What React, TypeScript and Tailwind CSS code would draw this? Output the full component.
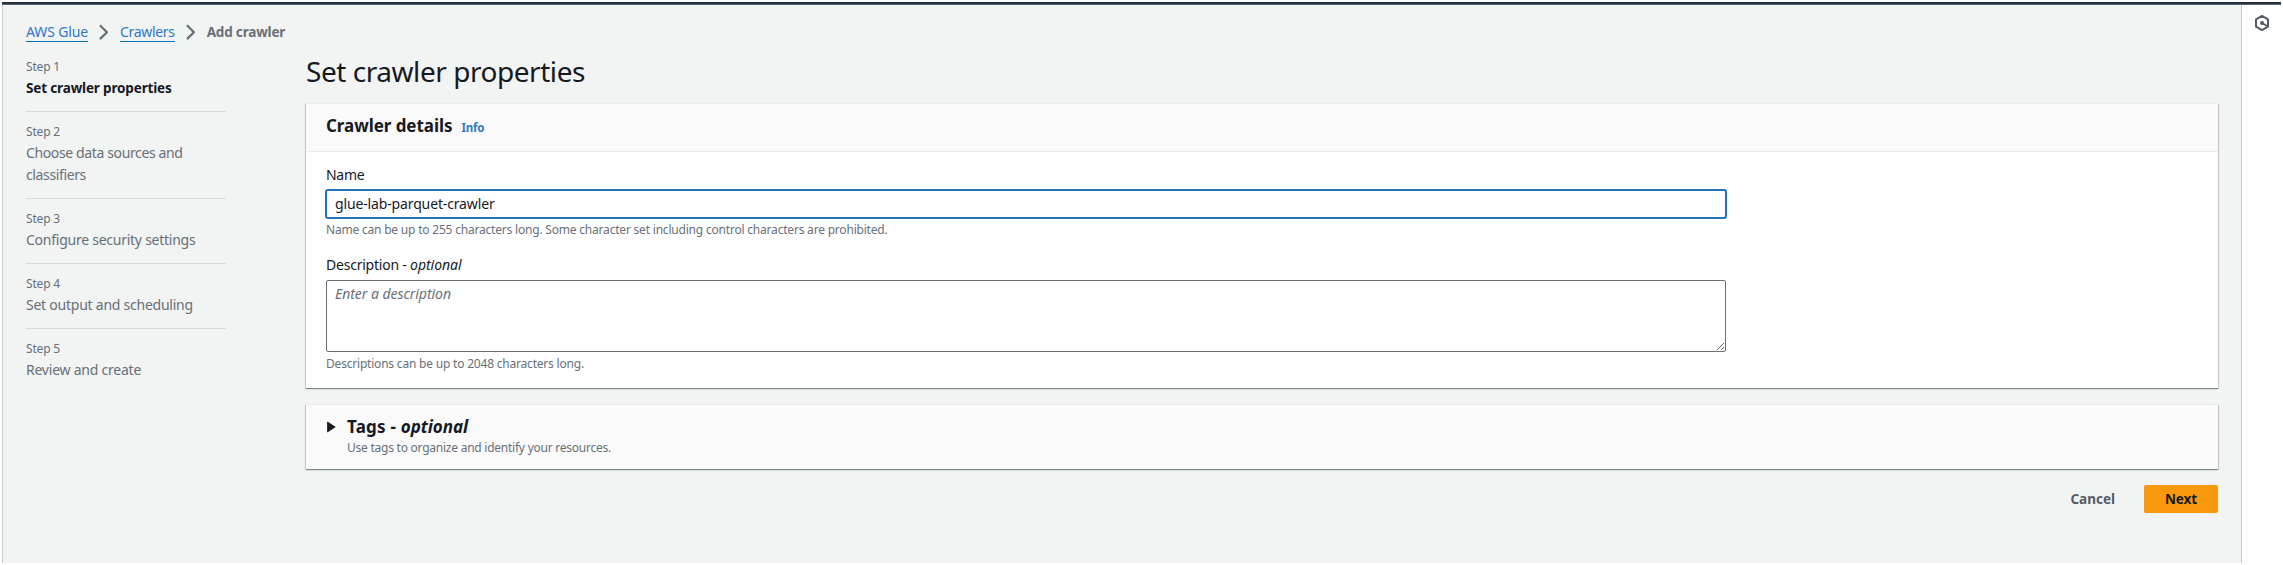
import type { ReactNode } from "react";

const steps = [
  { title: ["Set crawler properties"], tracking: "tracking-[-0.15px]", active: true },
  { title: ["Choose data sources and", "classifiers"], tracking: "tracking-[-0.37px]" },
  { title: ["Configure security settings"], tracking: "tracking-[-0.25px]" },
  { title: ["Set output and scheduling"], tracking: "tracking-[-0.24px]" },
  { title: ["Review and create"], tracking: "tracking-[-0.23px]" },
];

function Chevron() {
  return (
    <svg className="ml-[11px] mr-3 h-[22px] w-[9px]" viewBox="0 0 9 22" fill="none" stroke="#687078" strokeWidth="2.2">
      <path d="M0.9 4.3 L7.9 11.2 L0.9 18.1" />
    </svg>
  );
}

function Card({ className, children }: { className: string; children: ReactNode }) {
  return (
    <section
      className={
        "border-t border-[#eaeded] shadow-[0_1px_1px_0_rgba(0,28,36,0.3),1px_1px_1px_0_rgba(0,28,36,0.15),-1px_1px_1px_0_rgba(0,28,36,0.15)] " +
        className
      }
    >
      {children}
    </section>
  );
}

function Steps() {
  return (
    <ol className="mt-3 w-[200px] text-[#687078]">
      {steps.map((step, i) => (
        <li key={i} className={i < steps.length - 1 ? "mb-2 border-b border-[#d5dbdb] pb-3" : ""}>
          <div className="h-[22px] pt-px text-[12px] leading-[22px] tracking-[-0.18px]">Step {i + 1}</div>
          <div
            className={
              "whitespace-nowrap leading-[22px] " +
              step.tracking +
              (step.active ? " text-[13.5px] font-bold text-[#16191f]" : " text-[14px]")
            }
          >
            {step.title.map((line) => (
              <div key={line}>{line}</div>
            ))}
          </div>
        </li>
      ))}
    </ol>
  );
}

export default function App() {
  return (
    <div className="flex h-[565px] w-[2283px] flex-col overflow-hidden bg-white px-[2px] pt-[2px] pb-[2px] font-['Noto_Sans','Open_Sans',sans-serif] text-[14px] leading-[22px] text-[#16191f]">
      <div className="h-[3px] shrink-0 border-b border-[#5b6571] bg-[#232f3e]" />
      <div className="flex min-h-0 flex-1">
        <div className="flex w-[2240px] flex-col border-x border-[#c6caca] bg-[#f2f3f3] pl-[23px] pr-[23px] pt-4">
          <nav className="flex h-[22px] items-start whitespace-nowrap text-[#2f78c4]">
            <a className="h-[21px] border-b border-[#0073bb] tracking-[-0.14px]">AWS Glue</a>
            <Chevron />
            <a className="h-[21px] border-b border-[#0073bb] tracking-[-0.32px]">Crawlers</a>
            <Chevron />
            <span className="text-[13.5px] font-bold tracking-[-0.17px] text-[#687078]">Add crawler</span>
          </nav>
          <div className="flex">
            <div className="w-[280px] shrink-0">
              <Steps />
            </div>
            <main className="w-[1912px] pt-[10px]">
              <h1 className="text-[28px] leading-9 tracking-[-0.45px]">Set crawler properties</h1>
              <Card className="mt-[14px] h-[285px] bg-white">
                <header className="flex h-12 items-start border-b border-[#eaeded] bg-[#fafafa] pl-5 pt-[11px]">
                  <h2 className="text-[17px] font-bold leading-[22px] tracking-[-0.06px]">Crawler details</h2>
                  <a className="ml-[9px] pt-[2px] text-[11.5px] font-bold leading-[22px] tracking-[-0.15px] text-[#2f78c4]">Info</a>
                </header>
                <div className="px-5 pt-3">
                  <label className="block tracking-[-0.3px]">Name</label>
                  <input
                    readOnly
                    value="glue-lab-parquet-crawler"
                    className="-ml-px mt-[3px] block h-[30px] w-[1402px] rounded-[3px] border-2 border-[#2374bb] bg-white px-2 pb-px tracking-[-0.14px] outline-none"
                  />
                  <p className="mt-[3px] text-[12px] leading-4 tracking-[-0.2px] text-[#687078]">
                    Name can be up to 255 characters long. Some character set including control characters are prohibited.
                  </p>
                  <label className="mt-4 block tracking-[-0.22px]">
                    Description - <i className="tracking-[-0.04px]">optional</i>
                  </label>
                  <textarea
                    readOnly
                    placeholder="Enter a description"
                    className="mt-1 block h-[72px] w-[1400px] resize rounded-[2px] border border-[#687078] bg-white px-2 py-[2px] tracking-[-0.04px] outline-none placeholder:italic placeholder:text-[#687078]"
                  />
                  <p className="mt-1 text-[12px] leading-4 tracking-[-0.2px] text-[#687078]">
                    Descriptions can be up to 2048 characters long.
                  </p>
                </div>
              </Card>
              <Card className="mt-4 flex h-[65px] bg-[#fafafa] pl-[21px] pt-[10px]">
                <svg className="mt-[6px] h-[12px] w-[9px]" viewBox="0 0 9 12" fill="#16191f">
                  <path d="M0.5 1 L8.2 6 L0.5 11 Z" stroke="#16191f" strokeWidth="0.8" strokeLinejoin="round" />
                </svg>
                <div className="ml-[11px]">
                  <h2 className="pt-px text-[17px] font-bold leading-[22px] tracking-[0.22px]">
                    Tags - <i className="tracking-[0px]">optional</i>
                  </h2>
                  <p className="mt-[2px] text-[12px] leading-4 tracking-[-0.24px] text-[#687078]">
                    Use tags to organize and identify your resources.
                  </p>
                </div>
              </Card>
              <div className="mt-4 flex items-center justify-end text-[13.5px] font-bold">
                <button className="mr-[29px] h-7 text-[#545b64]">Cancel</button>
                <button className="h-7 w-[74px] rounded-[2px] bg-[#f7980f] tracking-[-0.1px] text-[#16191f]">Next</button>
              </div>
            </main>
          </div>
        </div>
        <aside className="pl-[12px] pt-[9px]">
          <svg className="h-[18px] w-4" viewBox="0 0 16 18" fill="none" stroke="#545b64" strokeWidth="2">
            <path d="M8 1.9 L14 5.3 V12.7 L8 16.1 L2 12.7 V5.3 Z" strokeLinejoin="round" />
            <path d="M8 9 L13 12" />
            <circle cx="8" cy="9" r="2" fill="#545b64" stroke="none" />
          </svg>
        </aside>
      </div>
    </div>
  );
}
